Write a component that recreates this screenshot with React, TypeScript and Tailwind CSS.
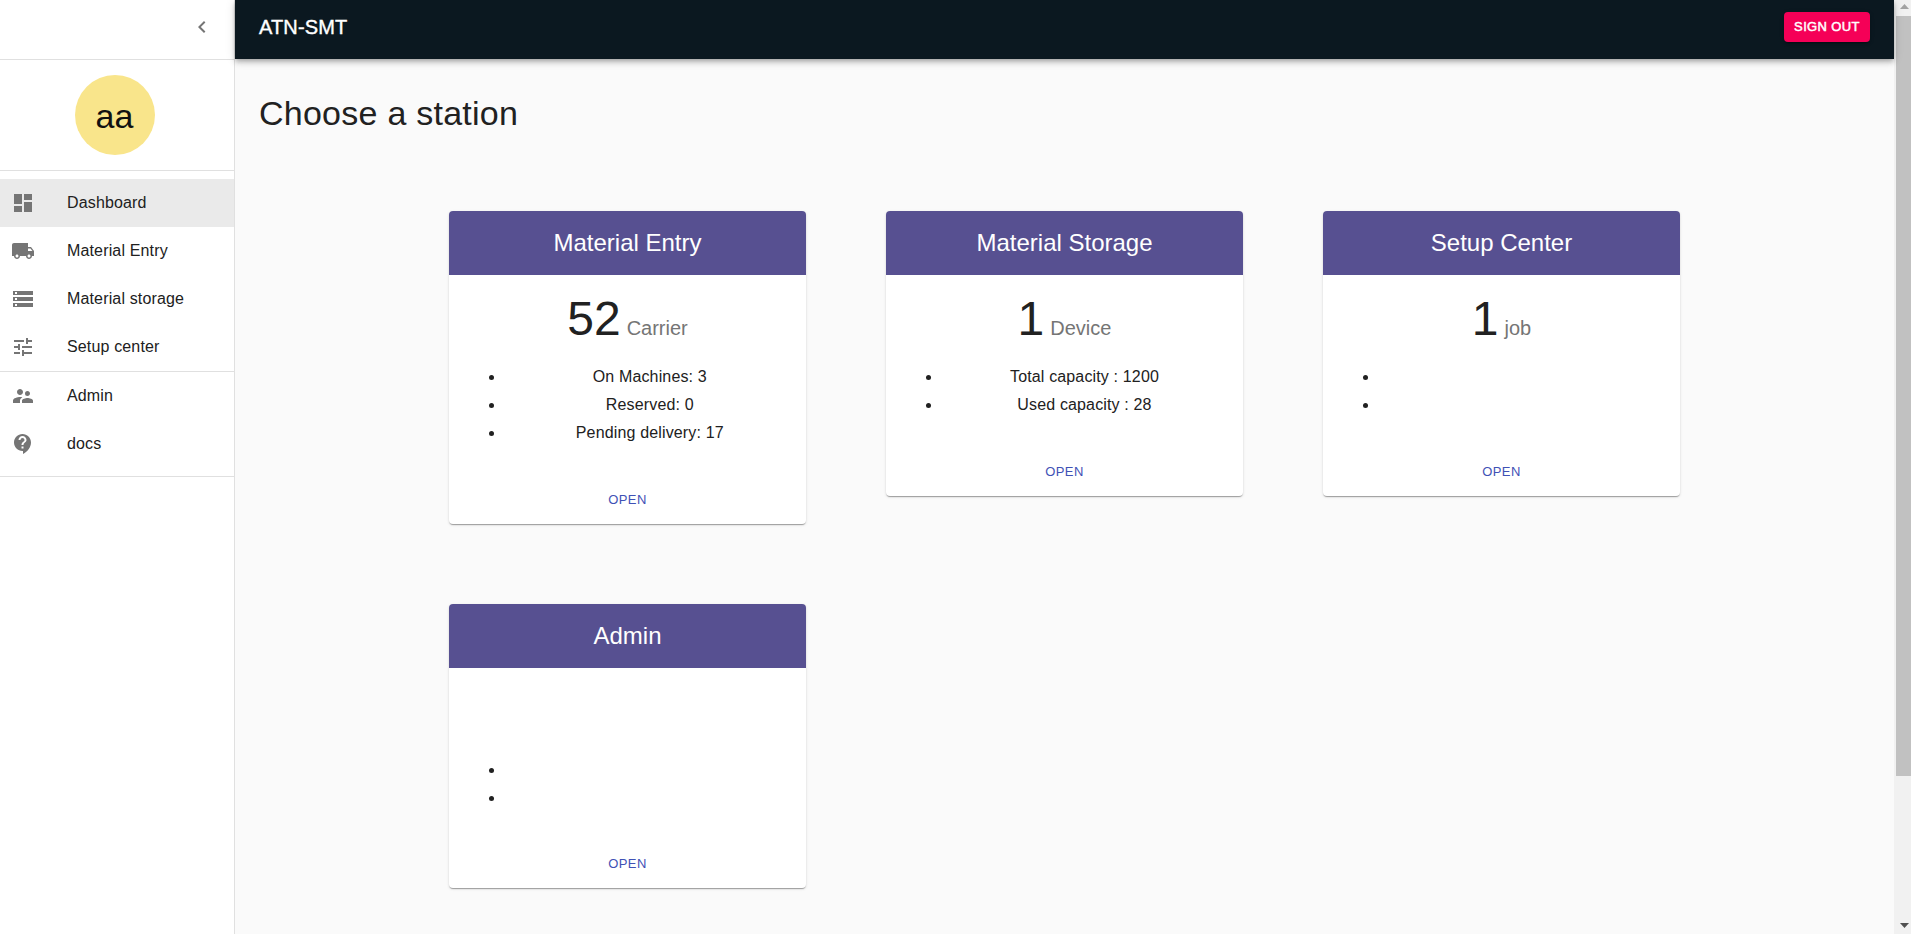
import type { ReactNode } from "react";
import type { IconType } from "react-icons";
import {
  MdChevronLeft,
  MdContactSupport,
  MdDashboard,
  MdLocalShipping,
  MdStorage,
  MdSupervisorAccount,
  MdTune,
} from "react-icons/md";

type Station = {
  title: string;
  count?: string;
  unit?: string;
  lines: string[];
};

const stations: Station[] = [
  {
    title: "Material Entry",
    count: "52",
    unit: "Carrier",
    lines: ["\u00a0On Machines: 3", "\u00a0Reserved: 0", "\u00a0Pending delivery: 17"],
  },
  {
    title: "Material Storage",
    count: "1",
    unit: "Device",
    lines: ["Total capacity : 1200", "Used capacity : 28"],
  },
  { title: "Setup Center", count: "1", unit: "job", lines: ["", ""] },
  { title: "Admin", lines: ["", ""] },
];

function NavItem({ icon: Icon, label, active }: { icon: IconType; label: string; active?: boolean }) {
  return (
    <li className={active ? "bg-[#eaeaea]" : ""}>
      <a className="flex h-12 items-center pl-[11px]">
        <Icon className="size-6 shrink-0 text-[#757575]" />
        <span className="ml-8 leading-6 tracking-[0.00938em]">{label}</span>
      </a>
    </li>
  );
}

function NavGroup({ children, className }: { children: ReactNode; className: string }) {
  return <ul className={`border-b border-[#e0e0e0] ${className}`}>{children}</ul>;
}

function StationCard({ title, count, unit, lines }: Station) {
  return (
    <article className="w-[357px] overflow-hidden rounded bg-white text-center shadow-[0_2px_1px_-1px_rgba(0,0,0,0.2),0_1px_1px_0_rgba(0,0,0,0.14),0_1px_3px_0_rgba(0,0,0,0.12)]">
      <h2 className="bg-[#575091] py-4 text-2xl leading-8 text-white">{title}</h2>
      <div className="px-4 pt-4 pb-[29.5px]">
        <div className="mb-4 flex h-14 items-baseline justify-center">
          {count && (
            <>
              <span className="text-5xl leading-[56px]">{count}</span>
              <span className="ml-[6px] text-xl leading-8 text-[#757575]">{unit}</span>
            </>
          )}
        </div>
        <ul className="list-disc pl-10">
          {lines.map((line, i) => (
            <li key={i} className="h-7 leading-7 tracking-[0.00938em]">
              {line}
            </li>
          ))}
        </ul>
      </div>
      <div className="flex justify-center px-2 pt-2 pb-[8.35px]">
        <button className="rounded px-[5px] py-1 text-[13px] leading-[22.75px] tracking-[0.02857em] text-[#3f51b5]">
          OPEN
        </button>
      </div>
    </article>
  );
}

function Scrollbar() {
  return (
    <div className="flex w-[17px] shrink-0 flex-col bg-[#f1f1f1] pl-0.5">
      <svg className="h-4 w-[15px] shrink-0" viewBox="0 0 15 16">
        <path d="M4 9h9L8.500 4z" fill="#a3a3a3" />
      </svg>
      <div className="h-[760px] bg-[#c1c1c1]" />
      <div className="grow" />
      <svg className="h-4 w-[15px] shrink-0" viewBox="0 0 15 16">
        <path d="M4 5h9L8.500 10z" fill="#505050" />
      </svg>
    </div>
  );
}

export default function App() {
  return (
    <div className="flex h-[934px] w-full overflow-hidden bg-[#fafafa] font-['Liberation_Sans',Arial,sans-serif] text-base text-[#212121]">
      <aside className="flex w-[235px] shrink-0 flex-col border-r border-[#e0e0e0] bg-white">
        <div className="flex h-[60px] items-center justify-end border-b border-[#e0e0e0] pr-5 pb-[5px]">
          <MdChevronLeft className="size-6 text-[#757575]" />
        </div>
        <div className="flex h-[111px] items-center border-b border-[#e0e0e0] pl-[75px]">
          <div className="flex size-20 items-center justify-center rounded-full bg-[#f9e58b] text-[34px] text-[#111]">
            <span className="pt-0.5 pr-px">aa</span>
          </div>
        </div>
        <nav>
          <NavGroup className="pt-2">
            <NavItem icon={MdDashboard} label="Dashboard" active />
            <NavItem icon={MdLocalShipping} label="Material Entry" />
            <NavItem icon={MdStorage} label="Material storage" />
            <NavItem icon={MdTune} label="Setup center" />
          </NavGroup>
          <NavGroup className="pb-2">
            <NavItem icon={MdSupervisorAccount} label="Admin" />
            <NavItem icon={MdContactSupport} label="docs" />
          </NavGroup>
        </nav>
      </aside>

      <div className="flex min-w-0 grow flex-col">
        <header className="z-10 flex h-[59px] shrink-0 items-center justify-between bg-[#0b1820] px-6 pb-[5px] text-white shadow-[0_2px_4px_-1px_rgba(0,0,0,0.2),0_4px_5px_0_rgba(0,0,0,0.14),0_1px_10px_0_rgba(0,0,0,0.12)]">
          <h1 className="text-xl leading-8 font-medium tracking-[0.0075em] [-webkit-text-stroke:0.4px_white]">ATN-SMT</h1>
          <button className="h-[30px] w-[86px] rounded bg-[#f50057] text-[13px] font-medium tracking-[0.02857em] [-webkit-text-stroke:0.5px_white] shadow-[0_3px_1px_-2px_rgba(0,0,0,0.2),0_2px_2px_0_rgba(0,0,0,0.14),0_1px_5px_0_rgba(0,0,0,0.12)]">
            SIGN OUT
          </button>
        </header>
        <main className="px-6 pt-[33px]">
          <h1 className="text-[34px] leading-[42px] tracking-[0.00735em]">Choose a station</h1>
          <div className="mt-[77px] ml-[190px] grid grid-cols-[357px_357px_357px] items-start gap-20">
            {stations.map((station) => (
              <StationCard key={station.title} {...station} />
            ))}
          </div>
        </main>
      </div>
      <Scrollbar />
    </div>
  );
}
